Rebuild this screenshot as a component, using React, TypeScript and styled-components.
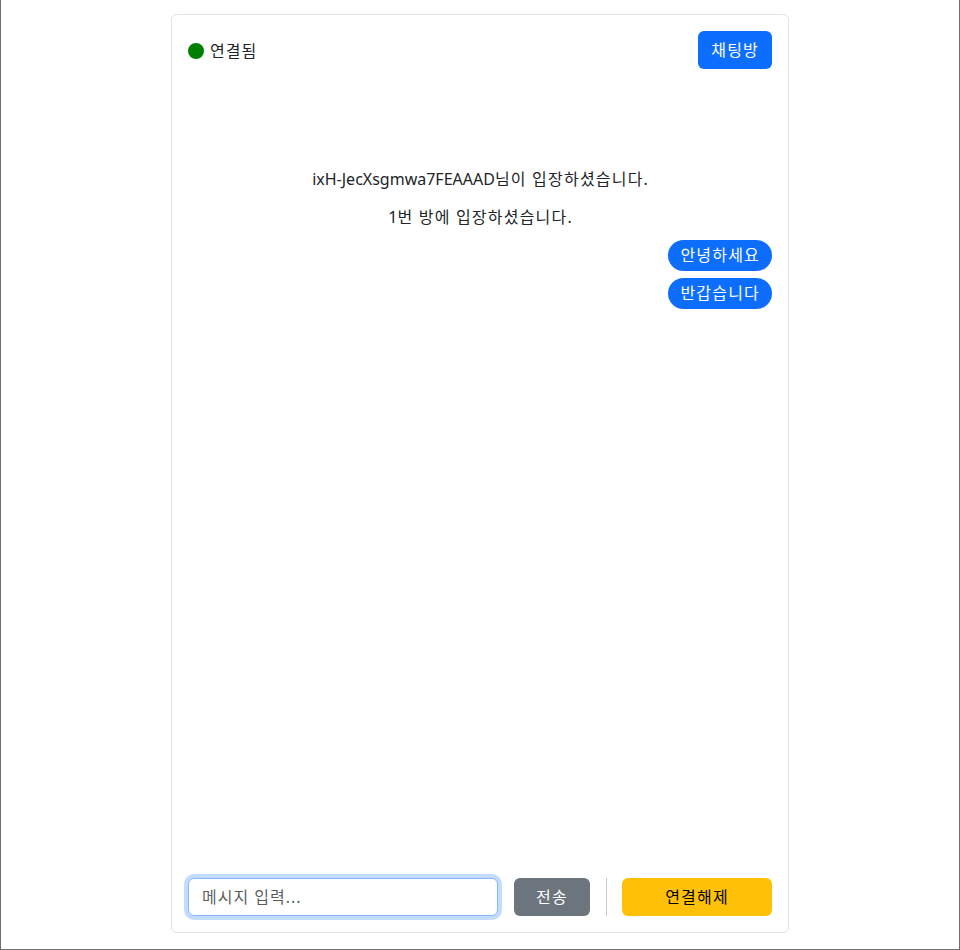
import { Fragment, useState } from 'react'
import styled, { createGlobalStyle } from 'styled-components'

const GlobalStyle = createGlobalStyle`
    * {
        box-sizing: border-box;
    }

    body {
        margin: 0;
        font-family: "Noto Sans", "Noto Sans CJK KR", sans-serif;
        font-size: 16px;
        line-height: 1.5;
        color: #212529;
        background: #fff;
    }
`

const Page = styled.div`
    height: 950px;
    border: 1px solid #6f6f6f;
    border-top: none;
    padding-top: 14px;
`

const ChatCard = styled.div`
    width: 618px;
    height: 919px;
    margin: 0 auto;
    padding: 16px;
    border: 1px solid #dee2e6;
    border-radius: 6px;
    background: #fff;

    display: flex;
    flex-direction: column;
`

const Header = styled.div`
    display: flex;
    align-items: center;
    justify-content: space-between;
    height: 38px;
`

const Status = styled.div`
    display: flex;
    align-items: center;
    gap: 6px;
    padding-top: 1px;
    letter-spacing: 1px;
`

const StatusDot = styled.span<{ $online: boolean }>`
    width: 16px;
    height: 16px;
    border-radius: 50%;
    background: ${(p) => (p.$online ? '#008000' : '#dc3545')};
`

const Button = styled.button<{ $variant: 'primary' | 'secondary' | 'warning'; $width?: number }>`
    height: 38px;
    padding: 0 12px;
    width: ${(p) => (p.$width ? `${p.$width}px` : 'auto')};
    border: 1px solid transparent;
    border-radius: 6px;
    font-family: inherit;
    font-size: 16px;
    line-height: 1.5;
    letter-spacing: 1.2px;
    cursor: pointer;
    flex-shrink: 0;

    background: ${(p) => ({ primary: '#0d6efd', secondary: '#6c757d', warning: '#ffc107' })[p.$variant]};
    color: ${(p) => (p.$variant === 'warning' ? '#000' : '#fff')};
`

const MessageList = styled.div`
    flex: 1;
    overflow-y: auto;
    padding-top: 95px;

    display: flex;
    flex-direction: column;
    gap: 7px;
`

const SystemMessage = styled.div`
    height: 31px;
    line-height: 31px;
    text-align: center;
    color: #212529;
`

const Bubble = styled.div`
    align-self: flex-end;
    height: 31px;
    line-height: 31px;
    padding: 0 12px;
    border-radius: 999px;
    background: #0d6efd;
    color: #fff;
`

// hangul glyphs here run a bit narrower than the original font
const Ko = styled.span`
    letter-spacing: 1.2px;
`

const Footer = styled.form`
    display: flex;
    align-items: center;
    gap: 16px;
`

const MessageInput = styled.input`
    flex: 1;
    min-width: 0;
    height: 38px;
    padding: 0 13px;
    border: 1px solid #86b7fe;
    border-radius: 6px;
    box-shadow: 0 0 0 4px rgba(13, 110, 253, 0.25);
    outline: none;
    font-family: inherit;
    font-size: 16px;
    color: #212529;

    &::placeholder {
        color: rgba(33, 37, 41, 0.75);
        letter-spacing: 1px;
    }
`

const Divider = styled.div`
    width: 1px;
    align-self: stretch;
    margin-right: -1px;
    background: #212529;
    opacity: 0.25;
`

type ChatItem = { kind: 'system' | 'mine'; text: string }

const initialMessages: ChatItem[] = [
    { kind: 'system', text: 'ixH-JecXsgmwa7FEAAAD님이 입장하셨습니다.' },
    { kind: 'system', text: '1번 방에 입장하셨습니다.' },
    { kind: 'mine', text: '안녕하세요' },
    { kind: 'mine', text: '반갑습니다' },
]

function Spaced({ text }: { text: string }) {
    return (
        <>
            {text.split(/([가-힣 ]+)/).map((part, i) =>
                /[가-힣]/.test(part) ? <Ko key={i}>{part}</Ko> : <Fragment key={i}>{part}</Fragment>
            )}
        </>
    )
}

export default function App() {
    const [messages] = useState(initialMessages)
    const [value, setValue] = useState('')

    return (
        <>
            <GlobalStyle />
            <Page>
                <ChatCard>
                    <Header>
                        <Status>
                            <StatusDot $online />
                            연결됨
                        </Status>
                        <Button $variant='primary'>채팅방</Button>
                    </Header>

                    <MessageList>
                        {messages.map((m, i) =>
                            m.kind === 'system'
                                ? <SystemMessage key={i}><Spaced text={m.text} /></SystemMessage>
                                : <Bubble key={i}><Spaced text={m.text} /></Bubble>
                        )}
                    </MessageList>

                    <Footer onSubmit={(e) => e.preventDefault()}>
                        <MessageInput type='text' placeholder='메시지 입력...' value={value} onChange={(e) => setValue(e.target.value)} />
                        <Button $variant='secondary' $width={76}>전송</Button>
                        <Divider />
                        <Button $variant='warning' type='button' $width={150}>연결해제</Button>
                    </Footer>
                </ChatCard>
            </Page>
        </>
    )
}
